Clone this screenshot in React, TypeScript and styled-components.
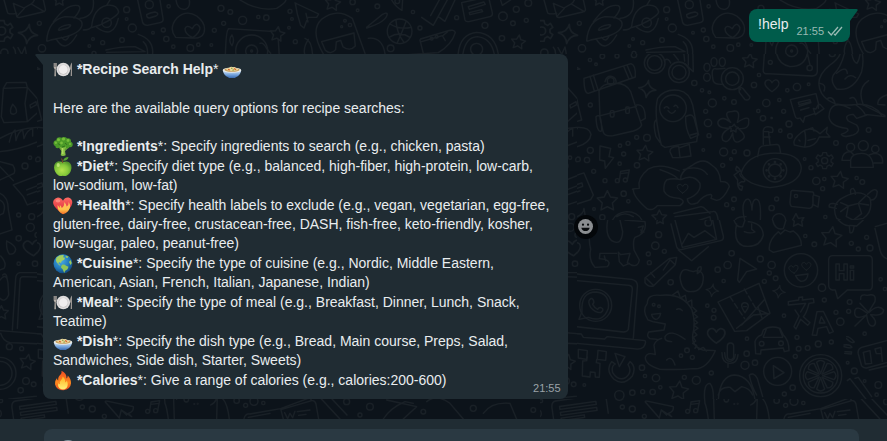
import React from "react";
import styled, { createGlobalStyle } from "styled-components";

const GlobalStyle = createGlobalStyle`
  * { box-sizing: border-box; }
  body {
    margin: 0;
    background: #0c131a;
    color: #e9edef;
    font-family: "Liberation Sans", Arial, sans-serif;
    font-size: 14px;
    line-height: 19px;
  }
`;

/* ---------- layout ---------- */

const Page = styled.div`
  display: flex;
  flex-direction: column;
  height: 100vh;
  overflow: hidden;
`;

const Chat = styled.main`
  position: relative;
  flex: none;
  display: flex;
  flex-direction: column;
  gap: 12px;
  padding: 9px 37px 20px 43px;
`;

const Wallpaper = styled.svg`
  position: absolute;
  inset: 0;
  width: 100%;
  height: 100%;
  fill: none;
  stroke: #192026;
  stroke-width: 4;
  stroke-linecap: round;
  stroke-linejoin: round;
`;

const MessageRow = styled.div<{ $own?: boolean }>`
  position: relative;
  display: flex;
  align-items: center;
  justify-content: ${(p) => (p.$own ? "flex-end" : "flex-start")};
  gap: 6px;
`;

const Bubble = styled.article<{ $own?: boolean }>`
  position: relative;
  display: flex;
  flex-direction: ${(p) => (p.$own ? "row" : "column")};
  gap: ${(p) => (p.$own ? "8px" : "19px")};
  max-width: 65%;
  padding: ${(p) => (p.$own ? "6px 7px 8px 9px" : "6px 8px 9px 10px")};
  border-radius: ${(p) => (p.$own ? "8px 0 8px 8px" : "0 8px 8px 8px")};
  background: ${(p) => (p.$own ? "#005c4b" : "#202c33")};
`;

const Tail = styled.svg<{ $own?: boolean }>`
  position: absolute;
  top: 0;
  ${(p) => (p.$own ? "right: -8px;" : "left: -8px;")}
  width: 8px;
  height: 12px;
  fill: ${(p) => (p.$own ? "#005c4b" : "#202c33")};
`;

const Title = styled.p`
  margin: 0 0 1px;
`;

const Text = styled.p`
  margin: 0;
`;

const Options = styled.ul`
  display: flex;
  flex-direction: column;
  gap: 1px;
  margin: 0;
  padding: 0;
  list-style: none;
`;

const Emoji = styled.svg`
  width: 20px;
  height: 19px;
  vertical-align: top;
  overflow: visible;
`;

const Meta = styled.span<{ $floating?: boolean }>`
  display: flex;
  align-items: center;
  align-self: flex-end;
  gap: 3px;
  font-size: 11px;
  line-height: 12px;
  color: ${(p) => (p.$floating ? "#9ba3a8" : "#99bab3")};
  ${(p) => (p.$floating ? "position: absolute; right: 7px; bottom: 5px;" : "margin-bottom: -3px;")}
`;

const Ticks = styled.svg`
  width: 16px;
  height: 12px;
  fill: none;
  stroke: currentColor;
`;

const ReactButton = styled.button`
  display: grid;
  place-items: center;
  width: 24px;
  height: 24px;
  padding: 0;
  border: 0;
  border-radius: 50%;
  background: #04070a;
`;

const Composer = styled.footer`
  flex: none;
  padding: 10px 28px 10px 44px;
  background: #202c33;
`;

const Field = styled.div`
  display: flex;
  align-items: center;
  gap: 12px;
  padding: 10px 13px;
  border-radius: 8px;
  background: #2a3942;
`;

const FieldButton = styled.button`
  display: flex;
  padding: 0;
  border: 0;
  background: none;
`;

const Input = styled.input`
  flex: 1;
  min-width: 0;
  padding: 0;
  border: 0;
  outline: 0;
  background: none;
  color: inherit;
  font: inherit;
`;

/* ---------- emoji ---------- */

const Plate = () => (
  <Emoji viewBox="0 0 20 19" role="img" aria-label="plate">
    <path d="M.7 3v4q0 1.7 1 2l-.3 7.2h1.5L2.7 9q1-.4 1-2V3" fill="#b8b1a9" />
    <path d="M1.7 3v4M2.8 3v4" stroke="#4b4f50" strokeWidth=".5" />
    <path d="M18.9 2.6q-2 2-1.8 7h.8l-.2 6.5h1.2z" fill="#aaa49e" />
    <circle cx="10.3" cy="9.5" r="6.8" fill="#dedcdc" />
    <circle cx="10.3" cy="9.7" r="5" fill="#c8c6c6" />
    <circle cx="10.3" cy="9.5" r="4.4" fill="#efeded" />
  </Emoji>
);

const Bowl = () => (
  <Emoji viewBox="0 0 20 19" role="img" aria-label="bowl">
    <defs>
      <linearGradient id="bowl" x1="0" y1="0" x2="0" y2="1">
        <stop offset="0" stopColor="#d9e8f6" />
        <stop offset=".6" stopColor="#6f9fda" />
        <stop offset="1" stopColor="#3a69ae" />
      </linearGradient>
    </defs>
    <g transform="translate(0 1)">
      <path d="M.8 9.500q1 5 5.400 6.700l.8.800h6l.8-.8q4.400-1.700 5.400-6.700z" fill="url(#bowl)" />
      <ellipse cx="10" cy="9.200" rx="9.300" ry="2.600" fill="#e8ece9" />
      <ellipse cx="10" cy="8.800" rx="7.600" ry="1.900" fill="#c59b58" />
      <path d="M4 9q1-2.300 3-2Q9 4.800 11 6.300q2-.8 3 1 2 0 2.400 1.700Q10 11 4 9" fill="#ead69b" />
      <path d="M6 8.300l2 .7M12 7.500l2 1.200" stroke="#d8672e" strokeWidth="1.300" />
      <path d="M9 7l1.500.8M10.500 9.300l1.500-.5" stroke="#7f9f3a" strokeWidth="1" />
    </g>
  </Emoji>
);

const Broccoli = () => (
  <Emoji viewBox="0 0 20 19" role="img" aria-label="broccoli">
    <path d="M4.500 8l3.800 6-.6 4.300q2 1.500 5-.1L12 14l4.500-4.500-3-3z" fill="#82bd42" />
    <path d="M9.500 11l.3 6" stroke="#b5d967" strokeWidth="1.400" />
    <path d="M7.800 12.500l-2-3M12 13l2-3" stroke="#4c8b27" strokeWidth=".8" />
    <g fill="#4b9a28">
      <circle cx="3.500" cy="6.300" r="3" />
      <circle cx="6.500" cy="3.500" r="3.200" />
      <circle cx="11" cy="3.200" r="3.300" />
      <circle cx="15" cy="4.200" r="3" />
      <circle cx="17" cy="7.500" r="2.700" />
      <circle cx="14.500" cy="9.500" r="2" />
      <circle cx="4.500" cy="9" r="2.200" />
      <circle cx="9.500" cy="7.200" r="3.600" />
    </g>
    <g fill="#77bd3b">
      <circle cx="5.500" cy="2.700" r="1.500" />
      <circle cx="10.500" cy="2" r="1.600" />
      <circle cx="15" cy="3.500" r="1.400" />
      <circle cx="2.800" cy="5.800" r="1.200" />
      <circle cx="8.500" cy="6" r="1.400" />
      <circle cx="17" cy="7" r="1.100" />
    </g>
    <path d="M5 6.500l2 1.500M12 6l2 2M9 10l3-1" stroke="#2c6c19" strokeWidth=".8" />
  </Emoji>
);

const Apple = () => (
  <Emoji viewBox="0 0 20 19" role="img" aria-label="apple">
    <defs>
      <radialGradient id="apple" cx=".45" cy=".6" r=".6">
        <stop offset="0" stopColor="#b4e34e" />
        <stop offset=".6" stopColor="#85c83a" />
        <stop offset="1" stopColor="#53962c" />
      </radialGradient>
    </defs>
    <path d="M9.500 5.300q2-1.200 4.500-.8Q18.700 5.600 18.500 11q-.8 5.600-4.500 7.600-2 .9-4.200.2-2.300.6-4.300-.4Q1.500 15.800 1 10.500 1.200 5 5.500 4.300q2.200 0 4 1" fill="url(#apple)" />
    <ellipse cx="9.600" cy="5.800" rx="3" ry="1" fill="#6fae35" />
    <path d="M9.700 6Q9.500 3 8.500 1.500" stroke="#795027" strokeWidth="1.100" fill="none" />
    <path d="M10 3.800Q11 .2 15.500 0q-.8 4-5.500 3.800" fill="#55a331" />
    <ellipse cx="5.200" cy="8" rx="1.600" ry="2" fill="#d3f28c" opacity=".7" />
  </Emoji>
);

const BurningHeart = () => (
  <Emoji viewBox="0 0 20 19" role="img" aria-label="heart">
    <defs>
      <linearGradient id="heart" x1="0" y1="0" x2="0" y2="1">
        <stop offset="0" stopColor="#ff6b62" />
        <stop offset="1" stopColor="#d32137" />
      </linearGradient>
      <linearGradient id="heartFlame" x1="0" y1="0" x2="0" y2="1">
        <stop offset="0" stopColor="#ffbc64" />
        <stop offset=".6" stopColor="#ffc34b" />
        <stop offset="1" stopColor="#f36b24" />
      </linearGradient>
    </defs>
    <path d="M10 18Q-2.500 9.500.8 4 4-.2 8 2.500q1.200.8 2 2.200Q12 1 15.500 1.500 19.500 2.500 19.300 7 18.200 13 10 18" fill="url(#heart)" />
    <path d="M4.500 9q1.500 1 1.800 3 .8-1 .5-3 1.500 1 2 3Q12 9.500 11 6q2.500 2 2.700 4.500 2.200-1.500 2-4.500 2 3 1.300 5.500-1.500 5-7 6.700Q4 15.500 4.500 9" fill="url(#heartFlame)" />
    <ellipse cx="5" cy="4.800" rx="2.400" ry="1.600" fill="#ff9386" opacity=".8" />
  </Emoji>
);

const Globe = () => (
  <Emoji viewBox="0 0 20 19" role="img" aria-label="globe">
    <defs>
      <radialGradient id="globe" cx=".4" cy=".35" r=".65">
        <stop offset="0" stopColor="#49a9e6" />
        <stop offset=".6" stopColor="#247dbd" />
        <stop offset="1" stopColor="#124d86" />
      </radialGradient>
    </defs>
    <circle cx="10" cy="9.800" r="9.500" fill="url(#globe)" />
    <path d="M3.500 3.500Q7 .5 11 1.200l-1 2 2 .6-.8 2-2.500 1.200L8 9 6 8l-.6 1.500 2.300 2-1.500-.3L3.500 8Q2.500 5.500 3.500 3.500" fill="#a4cf5f" />
    <path d="M9 10.800q2.500-1 4 1l2.500 1-1 2.500-2.300 1.500-1 2.200-1.400-3.500-2-2.200z" fill="#8fc458" />
    <path d="M12.500 1.800l3 .8-1 1.500-1.700-.5M17.500 6l1.300 3-1.300 2-1.500-3z" fill="#9ac95d" />
  </Emoji>
);

const Fire = () => (
  <Emoji viewBox="0 0 20 19" role="img" aria-label="fire">
    <defs>
      <linearGradient id="fire" x1="0" y1="0" x2="0" y2="1">
        <stop offset="0" stopColor="#ef4b23" />
        <stop offset=".6" stopColor="#ff8a1e" />
        <stop offset="1" stopColor="#e84b20" />
      </linearGradient>
      <linearGradient id="core" x1="0" y1="0" x2="0" y2="1">
        <stop offset="0" stopColor="#ffb21e" />
        <stop offset="1" stopColor="#fff27a" />
      </linearGradient>
    </defs>
    <path d="M8.500-.2Q14 2.500 13.500 7.500q1.400-1 1.200-3 3.600 3.300 3.300 8-.6 6-7.500 6.700-7.200 0-8.500-6Q1.800 9.500 4 7q.1 2 1.200 2.500-.4-4 2.400-6Q9 2 8.500-.2" fill="url(#fire)" />
    <path d="M9.500 5.500q3.300 2.500 2.500 6 1.500-.5 1.800-2 2 4.500-.3 7.500-3.200 3-7 .3Q4.200 15 5.500 12q.5 1 1.500 1.200-.5-3 1.500-4.700 1.200-1 1-3" fill="url(#core)" />
  </Emoji>
);

/* ---------- icons ---------- */

const Smiley = ({ size, color }: { size: number; color: string }) => (
  <svg width={size} height={size} viewBox="0 0 16 16" aria-hidden="true">
    <circle cx="8" cy="8" r="8" fill={color} />
    <circle cx="5.300" cy="6" r="1.200" fill="#080b0d" />
    <circle cx="10.700" cy="6" r="1.200" fill="#080b0d" />
    <path d="M3.500 9.200h9q-1 3.700-4.500 3.700t-4.500-3.700" fill="#080b0d" />
  </svg>
);

const FieldSmiley = () => (
  <svg width="22" height="22" viewBox="0 0 22 22" fill="none" stroke="#8696a0" strokeWidth="2" aria-hidden="true">
    <circle cx="11" cy="11" r="9" />
    <path d="M6.500 12.500q4.500 5 9 0M8 8v1M14 8v1" />
  </svg>
);

/* ---------- wallpaper doodles ---------- */

const Dots = ({ at }: { at: number[][] }) => (
  <>
    {at.map(([x, y, r]) => (
      <circle key={`${x}-${y}`} cx={x} cy={y} r={r} />
    ))}
  </>
);

type Spot = { x: number; y: number; r?: number; turn?: number };

const Star = ({ x, y, r = 24, turn = 0 }: Spot) => {
  const points = Array.from({ length: 10 }, (_, i) => {
    const a = ((i * 36 - 90 + turn) * Math.PI) / 180;
    const d = i % 2 ? r * 0.5 : r;
    return `${(x + d * Math.cos(a)).toFixed(1)},${(y + d * Math.sin(a)).toFixed(1)}`;
  });
  return <polygon points={points.join(" ")} />;
};

const Spark = ({ x, y, r = 24 }: Spot) => (
  <path transform={`translate(${x} ${y}) scale(${r / 24}) rotate(8)`} d="M0-24Q2-4 24 0 4 3 0 24-3 4-24 0-3-4 0-24Z" />
);

const Heart = ({ x, y, r = 22, turn = 0 }: Spot) => (
  <path transform={`translate(${x} ${y}) rotate(${turn}) scale(${r / 22})`} d="M0 20Q-32-2-18-15-7-22 0-8 9-23 20-13 29 1 0 20Z" />
);

const Gear = ({ x, y, r = 26 }: Spot) => (
  <g transform={`translate(${x} ${y}) scale(${r / 26})`}>
    <path d="M-6-26H6L8-18 15-14 22-19 28-9 21-4V4L28 9 22 19 15 14 8 18 6 26H-6L-8 18-15 14-22 19-28 9-21 4V-4L-28-9-22-19-15-14-8-18Z" />
    <circle r="10" />
  </g>
);

const Notes = ({ x, y }: Spot) => (
  <g transform={`translate(${x} ${y})`}>
    <circle cx="-14" cy="14" r="6" />
    <circle cx="10" cy="12" r="6" />
    <path d="M-8 14L-4-14 22-18 16 12M-5-7L20-10" />
  </g>
);

const Letter = ({ x, y, turn = -10 }: Spot) => (
  <g transform={`translate(${x} ${y}) rotate(${turn})`}>
    <path d="M-70-30H65Q75-30 75-20V30Q75 40 65 40H-60Q-70 40-80 52 -74 30-78 5-80-25-70-30Z" />
    <rect x="-55" y="-15" width="108" height="9" rx="4" />
    <rect x="-55" y="3" width="108" height="9" rx="4" />
    <rect x="-55" y="21" width="70" height="9" rx="4" />
  </g>
);

const Turntable = () => (
  <>
    <path d="M685 88Q678 92 676 170M685 86L815 94M835 120L838 170" />
    <circle cx="755" cy="153" r="48" />
    <circle cx="755" cy="153" r="18" />
    <circle cx="755" cy="153" r="3" />
    <path d="M696 105Q705 120 696 137 683 120 696 105M780 130Q790 126 800 145L812 160" />
    <Star x={832} y={103} r={23} turn={8} />
  </>
);

const TopDoodles = () => (
  <>
    <path d="M12 0L22 36Q22 45 50 40M40 10L50 48Q52 54 60 52L128 36Q138 34 136 26L130 0M40 10L72 24 93 12M93 12Q100 8 103 0M50 50L73 25M133 35L94 12" />
    <Star x={178} y={0} r={19} />
    <Gear x={5} y={93} r={31} />
    <Spark x={84} y={102} r={29} />
    <path d="M140 122Q145 60 195 50 250 50 246 76 240 100 190 112L152 120Q140 125 140 122ZM160 66Q200 10 235 17 248 24 222 54M250 90Q270 90 275 80 280 25 320 16 350 12 356 36 352 50 300 75L275 83M280 0Q285 50 240 55M320 16L330 0M168 116Q195 165 230 105M290 82Q340 120 355 55" />
    <path d="M176 88Q180 78 207 74 218 74 204 84L180 90Q174 92 176 88" />
    <circle cx="320" cy="68" r="14" />
    <path d="M185 112Q198 130 207 108M413 0L428 68Q432 76 442 76L480 68Q491 66 489 55L480 0M440 44Q450 38 465 36 480 40 468 48L448 54Q440 54 440 44" />
    <circle cx="448" cy="14" r="12" />
    <path d="M528 0Q532 30 555 28 572 24 568 0M527 112Q505 85 530 55 558 28 590 48 620 70 612 98 605 116 578 114ZM555 86Q560 72 577 86 590 62 600 83 600 98 578 113 555 102 555 86M720 0Q775 35 830 25 855 10 858 0" />
    <path d="M886 10Q882 6 892 12L956 42 950 52 924 52 912 84 902 76Q890 40 886 10M918 40L924 66" />
    <Star x={998} y={10} r={24} turn={8} />
    <path d="M972 165Q928 92 965 58 1010 22 1057 55L1095 160M965 125L1062 99 1066 138Q1050 156 1029 140L1022 121 1009 126 1007 149Q992 166 976 151ZM915 115Q935 120 938 165M925 118Q908 145 915 165" />
    <path d="M415 103Q465 120 457 168M430 125Q446 140 442 168M318 150Q360 140 405 140L435 155 320 157M40 142Q48 150 47 168M54 143L65 163 75 141 80 168" />
    <Turntable />
    <Dots
      at={[
        [118, 70, 6], [126, 145, 11], [13, 158, 11], [380, 29, 9], [380, 57, 4], [397, 84, 12], [366, 120, 7],
        [459, 98, 4], [490, 90, 6], [499, 117, 8], [506, 19, 5], [520, 140, 5], [571, 144, 10], [595, 134, 5],
        [634, 135, 4], [643, 91, 6], [663, 25, 9], [691, 36, 7], [671, 70, 6], [728, 61, 12], [775, 51, 5],
        [799, 53, 8], [870, 34, 6], [876, 57, 4], [867, 83, 4], [886, 125, 6], [1058, 6, 8], [1073, 31, 4],
        [308, 128, 6], [279, 117, 4], [268, 138, 4], [1035, 62, 4], [1050, 75, 5], [1025, 80, 3], [282, 160, 6],
      ]}
    />
    <g transform="translate(1110 0)">
      <path d="M65 0Q78 22 96 31L98 0M-10 84Q50 65 52 42 50 36 38 43L-10 82M155 52L190 76 232 0M182 47L208 0M205 50L225 64 255 0M275 8L285 60Q288 67 300 64L360 50Q369 48 367 38L358 0M275 8L320-2M295 20L342 6 346 13 298 28ZM298 38L335 29 338 35 300 44ZM392 0L397 16 422 0" />
      <circle cx="82" cy="4" r="7" />
      <circle cx="89" cy="94" r="37" />
      <path d="M60 72Q88 90 124 82M57 112Q90 92 120 112M78 60Q80 100 102 127M108 65Q95 100 82 128" />
      <path d="M150 120L160 160M152 117L228 94Q255 86 256 98 245 135 205 158L115 164M155 125L220 106 232 96M218 108L226 122" />
      <path d="M264 168Q268 102 320 97 377 100 386 168M278 168Q285 112 322 110 366 115 374 168" />
      <circle cx="320" cy="148" r="18" />
      <path d="M-5 115Q40 110 46 168" />
      <Star x={445} y={127} r={22} turn={8} />
      <Dots
        at={[
          [22, 19, 7], [129, 36, 5], [150, 84, 6], [62, 145, 10], [260, 53, 6], [345, 76, 9], [399, 49, 13],
          [439, 28, 9], [429, 70, 7], [469, 61, 6], [475, 9, 10], [396, 115, 8], [185, 116, 4], [200, 110, 4],
        ]}
      />
    </g>
  </>
);

const UpperDoodles = () => (
  <>
    <path d="M42 100L183 56Q198 60 196 96L55 145Q42 146 42 100M60 94L73 138M70 90L84 134M161 64L177 102M171 60L187 98M87 138Q95 115 130 115 168 112 182 140L215 240Q210 252 190 258L130 272Q105 276 100 262L90 220ZM92 212L199 184M78 215Q95 200 95 258 80 265 78 215M200 180Q225 175 226 220L212 228M105 110Q110 92 125 94 140 98 138 115" />
    <circle cx="122" cy="108" r="10" />
    <rect x="121" y="197" width="11" height="19" rx="4" />
    <rect x="167" y="186" width="11" height="19" rx="4" />
    <circle cx="254" cy="54" r="31" />
    <circle cx="254" cy="54" r="22" />
    <circle cx="327" cy="82" r="31" />
    <circle cx="327" cy="82" r="21" />
    <path d="M226 20L315 4 342 28 344 48M355 0V60M368 0L370 80 344 56M285 45Q295 38 302 54M230 12L305 20 325 45" />
    <path d="M274 300Q250 205 263 160 285 130 327 136 358 142 368 180L384 262 380 290 285 307ZM300 320Q298 305 326 304L330 337 308 338ZM330 308L358 298 363 333 330 338M257 226Q248 235 258 275L270 292M347 215Q370 200 375 230L386 270 362 280Q345 250 347 215M362 270L384 264" />
    <circle cx="309" cy="190" r="40" />
    <path d="M283 189Q290 180 297 190M312 184Q319 176 324 188M294 197Q306 213 316 197" />
    <path d="M90 303L122 310 117 335 131 338 106 370 104 348 89 345ZM0 250Q56 240 63 268 60 300 0 310M10 250L8 280M22 250L-4 284M0 130Q20 145 24 180L35 225 0 235M0 177L18 168M0 190L20 182M0 397L42 384 70 450 62 464 0 484M0 425L36 414 38 424 0 438M0 448L30 438" />
    <Spark x={8} y={69} r={22} />
    <Spark x={232} y={132} r={26} />
    <Star x={224} y={326} r={25} turn={6} />
    <Star x={112} y={469} r={32} />
    <Star x={268} y={518} r={23} />
    <Notes x={156} y={393} />
    <path d="M190 434Q180 432 208 430 200 400 235 372 270 352 328 378M190 434Q190 455 232 492 250 498 262 482L330 482Q350 468 328 460 290 458 282 438 280 415 290 405 310 398 332 404M332 404Q330 380 365 362 400 335 425 360 450 375 452 410 475 408 478 425 460 465 440 466L423 460Q428 450 422 448 400 450 382 474 355 485 352 462 395 445 390 415 370 385 333 404M270 374Q315 390 322 400M340 374Q390 358 412 388" />
    <Heart x={338} y={430} r={16} />
    <ellipse cx="411" cy="67" rx="9" ry="12" />
    <ellipse cx="432" cy="51" rx="9" ry="13" />
    <ellipse cx="457" cy="51" rx="9" ry="13" />
    <ellipse cx="411" cy="97" rx="10" ry="12" />
    <path d="M430 108Q420 65 440 72L465 70M430 108Q435 120 460 118" />
    <circle cx="487" cy="101" r="33" />
    <circle cx="487" cy="101" r="20" />
    <path d="M507 130Q515 125 520 132L540 156Q538 168 525 164L508 142ZM507 126L512 134" />
    <Star x={539} y={48} r={23} turn={5} />
    <Heart x={606} y={121} r={21} />
    <path d="M482 232Q457 198 485 200 515 190 502 232 540 208 536 230 538 255 504 250 535 275 515 285 490 305 488 264 475 300 458 285 450 265 478 250 440 250 444 230 455 210 482 232M493 238L497 245 505 248 498 253 498 261 490 256 482 260 484 251 478 246 487 244Z" />
    <path d="M585 0L580 70Q578 88 590 86L725 93Q740 94 742 80V0M618 0Q615 55 660 65 710 65 713 15M690 0Q710 5 712 25L720 60" />
    <circle cx="665" cy="18" r="17" />
    <circle cx="665" cy="18" r="3" />
    <circle cx="719" cy="69" r="8" />
    <circle cx="601" cy="52" r="6" />
    <path d="M828 0Q820 60 790 90 780 110 800 132 850 140 875 80 885 40 870 0M815 0Q818 35 780 60 730 100 755 145 785 190 860 178 910 175 935 210M843 0Q845 50 861 55 872 40 872 0M858 180Q880 195 885 208L945 215M840 190Q780 160 777 215 780 245 830 250 843 258 814 268 820 280 850 270 875 260 860 240L835 228Q820 210 850 208L860 220 890 210M750 115Q770 118 762 138M770 162Q790 150 796 178M840 160Q856 150 862 178M825 102Q840 84 857 98M800 85Q830 60 832 85" />
    <path d="M890 0Q890 22 910 20 924 15 922 0M900 0Q905 15 913 5M896 107Q860 130 880 180L945 212M950 150Q920 160 924 178L945 180" />
    <path d="M661 164L738 146 746 178 745 190M661 164L675 212Q678 224 690 219L700 232 704 216 733 206M685 172L720 164 722 170 687 179ZM687 184L723 173M692 195L717 188M744 180L738 192 730 190 736 209 762 191 750 178Z" />
    <path d="M673 300Q665 285 695 262 720 240 750 266L772 247 769 263 780 276 748 276Q730 320 673 300M704 258Q710 282 704 306M712 254L728 248 732 258M714 286L736 281M687 285L690 288" />
    <path d="M580 298V258Q580 246 594 245L605 247Q612 254 607 262L596 262 600 298M580 260H596M580 276H600M563 335L568 310Q574 302 584 302L620 298Q628 298 629 308L632 325M513 385Q530 330 600 325 690 320 694 370 690 420 600 428 530 420 513 385M509 387L512 394Q536 412 515 410 496 420 518 424L515 436Q500 430 503 405L492 390 510 378Q492 382 500 364 510 370 514 382" />
    <circle cx="615" cy="376" r="35" />
    <circle cx="615" cy="376" r="19" />
    <Dots at={[[615, 351, 2], [632, 358, 2], [640, 376, 2], [632, 394, 2], [615, 401, 2], [597, 394, 2], [590, 376, 2], [597, 358, 2]]} />
    <Gear x={764} y={347} r={24} />
    <Star x={808} y={406} r={27} turn={8} />
    <path d="M842 367V345Q845 325 875 325 908 325 910 367ZM840 346L816 346Q817 320 842 320L852 330M912 354H938Q940 325 912 325L898 330" />
    <circle cx="880" cy="302" r="15" />
    <circle cx="842" cy="307" r="12" />
    <circle cx="916" cy="312" r="11" />
    <path d="M668 436L728 441Q732 442 731 450L748 455 744 486 728 478Q728 490 718 490L664 484Q660 480 660 472L663 440Q664 436 668 436M729 453V476" />
    <circle cx="678" cy="453" r="5" />
    <path d="M800 520Q780 475 825 455 870 430 900 460 910 500 880 520L820 530ZM812 473L835 483 865 475 887 453M835 483L829 515 850 525 875 506 865 475M835 483L812 500M865 475L896 480M843 448Q838 430 850 430 858 440 856 448M893 448Q915 425 922 440 920 465 904 465M799 490L778 486Q775 475 789 475L802 478" />
    <path d="M528 540Q510 480 528 464 543 455 546 495 547 460 560 463 576 465 570 540M528 515Q490 512 494 540M122 540Q130 504 170 500 205 500 218 530M140 515Q165 498 190 515M312 505L393 485 400 487 420 505M315 515L428 500Q442 495 445 530M345 540L420 515 424 540M0 520Q40 515 42 490L46 515M665 530L678 506 685 520 702 518 692 530 706 540" />
    <Dots
      at={[
        [36, 10, 12], [60, 45, 5], [97, 34, 7], [78, 58, 4], [141, 33, 6], [192, 30, 8], [61, 180, 6], [373, 114, 8],
        [396, 136, 5], [418, 142, 4], [427, 174, 12], [463, 160, 5], [492, 171, 7], [407, 199, 6], [414, 234, 11],
        [417, 272, 6], [400, 315, 4], [461, 321, 12], [493, 320, 6], [483, 342, 4], [531, 324, 9], [458, 361, 6],
        [200, 277, 6], [231, 278, 10], [174, 295, 6], [150, 302, 5], [161, 327, 6], [201, 361, 8], [149, 356, 5],
        [61, 316, 9], [51, 345, 8], [24, 343, 7], [71, 379, 6], [105, 407, 6], [161, 446, 8], [175, 469, 5],
        [72, 492, 4], [97, 517, 8], [430, 5, 6], [481, 9, 10], [567, 90, 5], [552, 120, 8], [589, 174, 11],
        [628, 165, 5], [652, 136, 5], [681, 126, 11], [716, 118, 4], [565, 198, 5], [579, 220, 8], [605, 219, 2],
        [641, 199, 6], [657, 237, 9], [631, 257, 5], [660, 273, 7], [798, 294, 7], [704, 342, 4], [723, 368, 6],
        [739, 408, 11], [763, 402, 5], [758, 431, 6], [860, 399, 5], [877, 411, 7], [896, 255, 7], [787, 26, 9],
        [492, 463, 7], [470, 479, 6], [489, 491, 4], [605, 489, 8], [620, 462, 6], [627, 526, 20], [766, 516, 5], [0, 340, 3],
      ]}
    />
  </>
);

const LowerDoodles = () => (
  <>
    <path d="M113 0Q105 45 125 62 155 80 158 35L150 0M165 0L225 5Q232 40 195 52 188 60 192 90L208 120Q205 142 184 135L172 128 180 100 152 104 145 97 148 125 160 138 178 130M60 35Q55 60 62 88 55 120 75 142L112 140Q125 125 105 118L88 116 90 100 140 100M103 108L107 122M205 22L220 18 213 38M212 30L222 36" />
    <path d="M303 12L320 80Q325 92 337 88L452 62Q462 60 460 48L448 0M315 0L337 82 440 58 428 0M335 75L355 40 372 52 405 32 435 55M325 90L365 122 415 80" />
    <circle cx="415" cy="8" r="10" />
    <path d="M492 0Q500 25 518 20L525 0M500 12Q488 65 520 78 570 85 580 45 578 10 535 5M523 35Q540 42 555 36L545 28V12M608 0Q615 32 640 26L648 0M598 90Q595 60 625 35L632 42 645 30 660 36 670 33Q695 50 694 76L610 97ZM805 0Q825 20 840 16L860 18 880 0M838 18L840 38Q850 42 852 20M916 20L950 10M915 25L930 90Q935 110 950 116" />
    <Star x={784} y={52} r={32} turn={8} />
    <Star x={684} y={0} r={23} />
    <Star x={270} y={-3} r={17} />
    <Heart x={10} y={87} r={22} turn={-10} />
    <path d="M225 174L297 116 320 112 316 134 250 198Q235 202 225 188ZM297 116L314 133M230 176L250 196M242 158L254 172M300 120L280 150M358 152Q335 140 330 172 335 215 362 215 400 215 400 170 395 145 370 155ZM382 161Q380 140 393 140 397 152 382 161M510 115L560 147 530 155 508 187 503 180Z" />
    <circle cx="693" cy="151" r="50" />
    <Heart x={671} y={147} r={14} turn={-8} />
    <Heart x={709} y={138} r={14} />
    <path d="M677 167L714 162Q712 184 693 184 683 180 677 167" />
    <path d="M787 107H895Q907 107 907 120V197Q907 210 895 210H832L803 236 796 210H787Q776 208 776 195V120Q776 108 787 107M798 132H808V152H822V132H832V180H822V161H808V180H798ZM841 151H851V180H841ZM841 138H851V144H841Z" />
    <path d="M0 160L185 178Q205 182 202 202L190 355M0 180L178 196Q188 198 187 208L175 328Q172 336 160 336L0 318M0 340L34 342 40 352 104 357 111 350 225 362Q230 368 220 382 210 390 190 386L0 368" />
    <circle cx="77" cy="256" r="48" />
    <path d="M36 275L27 298 55 292Q100 310 115 265 120 220 78 216 32 216 36 275M60 238Q64 232 70 240 74 247 68 253 74 264 83 268 88 260 95 264 104 269 92 278 75 278 62 262 52 245 60 238" />
    <path d="M232 250Q215 270 234 300L248 305 286 312 282 330 236 336Q228 350 240 356L262 358M232 250Q232 222 270 226 340 218 366 270 378 310 368 345 365 380 398 390L436 392Q410 450 370 446 330 450 270 448 225 435 226 412 230 395 256 404L252 375Q257 360 275 355M345 358Q300 325 285 350 282 365 305 365M290 420Q305 405 315 435M308 225L324 213 330 230M333 233L346 226 349 242M352 247L365 240 366 262M370 263L380 273 370 280 383 291 371 297 383 308 371 315 384 325 371 334 381 345 370 352 377 363 368 370 380 376 375 385M386 389L400 382 409 393M320 268Q329 263 337 272M245 283L272 280Q268 298 257 298 247 295 245 283" />
    <circle cx="251" cy="254" r="4" />
    <circle cx="267" cy="259" r="4" />
    <path d="M444 246L567 190 600 280 530 332 494 334ZM515 315L585 237M564 260L576 294M560 267L598 283M500 325L550 285 600 280" />
    <path strokeDasharray="16 9" d="M480 230L524 296M523 207L560 270" />
    <path d="M525 278Q505 250 525 248 545 252 525 278M521 260H529" />
    <path d="M557 401L555 365Q560 350 575 345L580 330Q600 315 630 325L640 345Q657 360 657 392L643 395 640 384 573 390 572 402ZM580 352H638M580 350L590 325M628 325L638 350" />
    <circle cx="575" cy="371" r="7" />
    <circle cx="633" cy="370" r="7" />
    <path d="M655 245L686 240 687 232 698 231 697 240 730 236 732 248 717 250Q710 280 700 290L720 308 713 316 692 298 678 327 672 320 687 288 675 270M655 245V255L707 250 692 276M727 345L741 275 760 274 790 335 778 340 770 320 744 325 740 346ZM748 309L754 290 765 309ZM872 238Q870 220 892 226 920 218 915 245L895 277 870 250M892 280Q855 250 854 278 855 302 890 285 895 325 912 317 925 305 902 284 940 290 941 270 925 250 896 278M890 284L855 318" />
    <Heart x={439} y={346} r={26} />
    <Spark x={427} y={211} r={19} />
    <Spark x={627} y={215} r={19} />
    <rect x="472" y="369" width="19" height="50" rx="10" />
    <path d="M456 398Q456 430 480 430 502 430 504 404M464 398Q465 424 480 424 494 422 496 403M474 430V442M25 388L52 392 50 418 25 414ZM84 391L109 395 107 421 82 418ZM52 411L50 422 38 423 37 468 60 471 61 456 75 457 76 471 88 472 90 430 79 428 80 418M0 410L10 432 0 440M125 425Q105 450 132 478 160 500 187 468 200 440 180 425L174 434Q188 455 168 472 145 485 128 458 123 438 136 432ZM135 400L165 410 148 440Z" />
    <circle cx="623" cy="454" r="42" />
    <path d="M610 437L642 458 612 476Z" />
    <circle cx="752" cy="467" r="63" />
    <circle cx="752" cy="467" r="52" />
    {[0, 45, 90, 135, 180, 225, 270, 315].map((a) => (
      <path key={a} transform={`translate(752 467) rotate(${a})`} d="M0-6L-12-40Q0-52 12-40Z" />
    ))}
    <path d="M830 350Q840 350 853 366 846 372 830 356M822 375Q840 372 846 382 842 386 822 380M825 395L845 396 844 402 824 400M950 362L875 382Q862 388 865 402L875 438Q880 445 890 444L950 428M898 450L950 438M880 397L900 392 905 430 886 432ZM915 387L933 382 937 424M915 387L919 401 935 401M832 482L840 476 890 540M855 475L865 472 905 530" />
    <Star x={326} y={513} r={30} turn={6} />
    <Dots
      at={[
        [14, 131, 9], [266, 44, 9], [256, 77, 11], [235, 102, 6], [283, 94, 6], [238, 128, 6], [302, 187, 8],
        [443, 149, 8], [473, 135, 11], [485, 100, 8], [461, 183, 5], [571, 117, 9], [605, 135, 11], [598, 159, 6],
        [583, 184, 6], [617, 175, 7], [706, 48, 5], [733, 73, 7], [844, 70, 6], [865, 87, 6], [890, 52, 6],
        [900, 84, 9], [756, 203, 11], [763, 240, 6], [798, 277, 6], [811, 305, 11], [836, 274, 6], [839, 246, 7],
        [642, 287, 5], [681, 352, 6], [686, 386, 7], [713, 384, 7], [745, 372, 9], [784, 366, 6], [676, 409, 6],
        [412, 257, 5], [432, 271, 6], [431, 293, 7], [531, 356, 5], [530, 401, 8], [525, 436, 12], [555, 428, 8],
        [424, 459, 6], [379, 481, 12], [343, 472, 6], [351, 391, 7], [333, 407, 5], [367, 412, 6], [216, 443, 8],
        [225, 468, 5], [258, 474, 11], [271, 502, 5], [248, 516, 8], [218, 515, 6], [187, 518, 8], [148, 526, 14],
        [11, 494, 6], [43, 495, 4], [643, 522, 6], [668, 503, 8], [833, 428, 4], [853, 453, 9], [884, 483, 4],
        [925, 495, 10], [920, 524, 5], [884, 341, 5], [932, 178, 5], [945, 207, 5],
      ]}
    />
    <path d="M445 540Q450 468 493 465 545 468 555 540M404 540Q400 490 420 490 432 505 430 540M538 466Q550 455 562 475L578 530M538 466Q545 500 560 525M445 525Q450 500 480 502L495 515 515 500Q540 505 548 525" />
  </>
);

const BottomDoodles = () => (
  <>
    <g transform="translate(270 145) rotate(-8)">
      <path d="M-70-32H70Q80-32 82-22V26M-70-32Q-84-30-83-10V20L-95 40M-60-14H50V-5H-60ZM-60 4H50V13H-60ZM-60 21H10V29H-60Z" />
    </g>
    <path d="M466 126Q465 122 475 124L550 140Q552 155 535 160L545 170 514 150 508 174ZM514 150L530 165M645 130Q640 85 655 75 672 70 678 85L671 120 673 177M655 177Q650 140 645 130M777 46Q800 38 812 75L820 112 802 105Q785 65 777 46M804 110Q830 110 838 177M802 110L800 177M680 118Q678 60 730 45 790 42 801 92 805 125 782 135 785 177M700 177Q705 150 690 135 676 115 690 100 675 78 710 80 735 100 742 82 770 70 784 100 785 125 765 140 776 165 770 177M726 151Q742 154 760 142 758 165 742 166 728 160 726 151" />
    <ellipse cx="709" cy="117" rx="7" ry="9" />
    <ellipse cx="761" cy="104" rx="7" ry="9" />
    <circle cx="733" cy="132" r="1" />
    <circle cx="743" cy="131" r="1" />
    <Notes x={607} y={140} />
    <path d="M882 177Q885 160 900 162L992 146 1080 113 1085 122M992 146L1000 177M995 148L1085 122Q1095 120 1098 132L1106 177M1004 158L1013 176 1020 160 1028 173 1035 154M1042 155L1080 150M1046 166L1068 163M895 172L960 160M1112 10Q1120 40 1150 38L1191 25M1130 0L1140 20 1191 8" />
    <path d="M1073 62L1090 57 1191 165M1073 62L1080 80 1170 177M1100 68L1110 60 1130 85" />
    <Dots
      at={[
        [388, 106, 15], [427, 99, 9], [458, 95, 7], [488, 96, 10], [397, 141, 6], [427, 147, 9], [463, 169, 6],
        [619, 61, 12], [860, 122, 8], [884, 102, 6], [887, 136, 6], [912, 124, 12], [940, 129, 5], [153, 123, 5], [142, 161, 12],
        [1160, 104, 5], [1190, 125, 9],
      ]}
    />
    <g transform="translate(1200 0)">
      <path d="M100 177Q120 145 165 125L190 130M110 120L200 140 160 177M230 125Q260 100 300 130L340 177M400 160Q425 125 480 130L500 177" />
      <Dots at={[[60, 140, 10], [220, 155, 7], [370, 145, 9], [550, 150, 7], [30, 165, 6]]} />
    </g>
  </>
);

const LeftDoodles = () => (
  <>
    <path d="M10 115L20 98 78 97 82 112 120 155 122 180 82 215 12 218 4 200ZM10 115L82 112M82 115L75 160 82 215M38 163Q28 180 33 190 42 196 49 188 52 176 38 163M90 165L108 155 110 164 92 174Z" />
    <path d="M0 305Q60 300 125 270M0 265Q60 230 130 232M28 276Q35 245 45 240L48 272Q55 245 68 240L72 266Q80 240 98 236L98 258M0 335L38 345Q48 360 42 370L0 390M0 350L40 392M40 405L125 372M40 405L70 440 82 465 125 450M80 420L125 402M82 435L125 418" />
    <path d="M0 430Q25 440 25 480L36 540 0 552M0 450Q20 460 10 490L0 495M20 573Q18 600 28 612 45 615 47 598 45 585 20 573M2 618Q22 640 12 655L0 660" />
    <Heart x={98} y={593} r={27} turn={-6} />
    <path d="M0 690Q20 665 24 700L26 735Q15 760 0 745M8 675Q20 665 22 690M128 668H60Q48 670 47 685L37 840M128 682L70 680Q60 680 60 692L52 835M0 842L125 852M2 850Q10 875 30 878L128 882M128 750Q112 775 120 805M128 900L116 896 118 925 128 926" />
    <Star x={82} y={937} r={24} turn={10} />
    <Star x={4} y={789} r={22} />
    <circle cx="0" cy="970" r="48" />
    <circle cx="0" cy="970" r="36" />
    <Dots
      at={[
        [90, 323, 5], [114, 329, 7], [75, 348, 9], [56, 495, 6], [95, 500, 9], [91, 532, 12], [56, 565, 8],
        [112, 555, 7], [56, 641, 5], [105, 641, 8], [28, 890, 9], [65, 896, 6], [78, 993, 10], [101, 1003, 7], [62, 1021, 8],
      ]}
    />
    <Letter x={100} y={1070} turn={-6} />
  </>
);

const Doodles = () => (
  <Wallpaper aria-hidden="true">
    <defs>
      <g id="doodles">
        <svg x="0" y="0" width="540" height="54">
          <g transform="scale(.3333)"><TopDoodles /></g>
        </svg>
        <svg x="37" y="54" width="317" height="166">
          <g transform="translate(-7 -9) scale(.3333)"><UpperDoodles /></g>
        </svg>
        <svg x="37" y="220" width="317" height="179">
          <g transform="translate(-7 0) scale(.3333)"><LowerDoodles /></g>
        </svg>
        <svg x="0" y="399" width="540" height="21">
          <g transform="translate(-50 -39) scale(.3333)"><BottomDoodles /></g>
        </svg>
        <svg x="0" y="54" width="37" height="345">
          <g transform="translate(0 -4) scale(.3333)"><LeftDoodles /></g>
        </svg>
      </g>
      <pattern id="wallpaper" width="540" height="420" patternUnits="userSpaceOnUse">
        <use href="#doodles" />
      </pattern>
    </defs>
    <rect width="100%" height="100%" fill="url(#wallpaper)" stroke="none" />
  </Wallpaper>
);

/* ---------- content ---------- */

const options = [
  { icon: Broccoli, name: "Ingredients", text: "Specify ingredients to search (e.g., chicken, pasta)" },
  { icon: Apple, name: "Diet", text: "Specify diet type (e.g., balanced, high-fiber, high-protein, low-carb, low-sodium, low-fat)" },
  {
    icon: BurningHeart,
    name: "Health",
    text: "Specify health labels to exclude (e.g., vegan, vegetarian, egg-free, gluten-free, dairy-free, crustacean-free, DASH, fish-free, keto-friendly, kosher, low-sugar, paleo, peanut-free)",
  },
  {
    icon: Globe,
    name: "Cuisine",
    text: "Specify the type of cuisine (e.g., Nordic, Middle Eastern, American, Asian, French, Italian, Japanese, Indian)",
  },
  { icon: Plate, name: "Meal", text: "Specify the type of meal (e.g., Breakfast, Dinner, Lunch, Snack, Teatime)" },
  {
    icon: Bowl,
    name: "Dish",
    text: "Specify the dish type (e.g., Bread, Main course, Preps, Salad, Sandwiches, Side dish, Starter, Sweets)",
  },
  { icon: Fire, name: "Calories", text: "Give a range of calories (e.g., calories:200-600)" },
];

export default function App() {
  return (
    <Page>
      <GlobalStyle />
      <Chat>
        <Doodles />
        <MessageRow $own>
          <Bubble $own>
            <Tail $own viewBox="0 0 8 12" aria-hidden="true">
              <path d="M0 0H6.500Q8.500.3 7.200 2L0 12Z" />
            </Tail>
            <Text>!help</Text>
            <Meta>
              <time>21:55</time>
              <Ticks viewBox="0 0 16 12" aria-hidden="true">
                <path d="M1 6.500L4.200 10 11 2M7 9l1.200 1L15 2" strokeWidth="1.300" />
              </Ticks>
            </Meta>
          </Bubble>
        </MessageRow>
        <MessageRow>
          <Bubble>
            <Tail viewBox="0 0 8 12" aria-hidden="true">
              <path d="M8 0H1.500Q-.5.3.8 2L8 11Z" />
            </Tail>
            <Title>
              <Plate /> <b>*Recipe Search Help</b>* <Bowl />
            </Title>
            <Text>Here are the available query options for recipe searches:</Text>
            <Options>
              {options.map(({ icon: Icon, name, text }) => (
                <li key={name}>
                  <Icon /> <b>{`*${name}`}</b>
                  {`*: ${text}`}
                </li>
              ))}
            </Options>
            <Meta as="time" $floating>21:55</Meta>
          </Bubble>
          <ReactButton type="button" aria-label="React">
            <Smiley size={15} color="#8b8e91" />
          </ReactButton>
        </MessageRow>
      </Chat>
      <Composer>
        <Field>
          <FieldButton type="button" aria-label="Emoji">
            <FieldSmiley />
          </FieldButton>
          <Input type="text" aria-label="Message" />
        </Field>
      </Composer>
    </Page>
  );
}
